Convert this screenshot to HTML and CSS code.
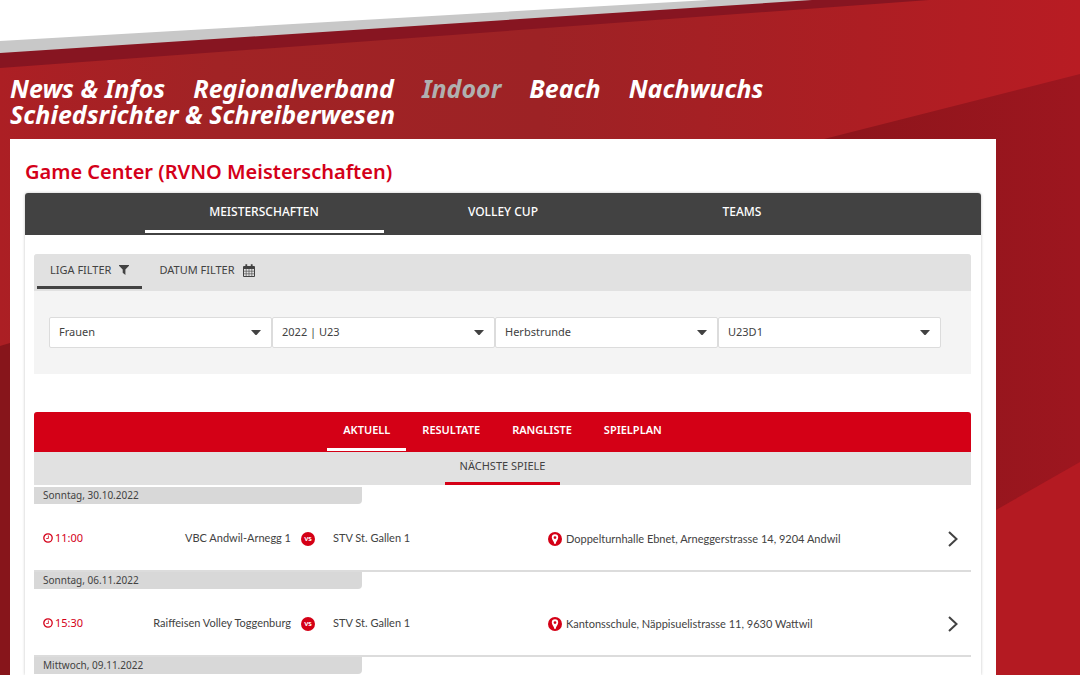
FILE: index.html
```html
<!DOCTYPE html>
<html lang="de">
<head>
<meta charset="utf-8">
<meta name="viewport" content="width=device-width, initial-scale=1">
<title>Game Center (RVNO Meisterschaften)</title>
<link rel="stylesheet" href="styles.css">
</head>
<body>
<svg class="backdrop" viewBox="0 0 1080 675" preserveAspectRatio="none" aria-hidden="true">
  <defs>
    <linearGradient id="red" x1="0" x2="1" y1="0" y2="0">
      <stop offset="0" stop-color="#ac1f24"/>
      <stop offset="0.2" stop-color="#a12325"/>
      <stop offset="0.5" stop-color="#9d2225"/>
      <stop offset="0.8" stop-color="#ad1e23"/>
      <stop offset="1" stop-color="#b81c23"/>
    </linearGradient>
    <linearGradient id="dark" x1="0" x2="1" y1="0" y2="0">
      <stop offset="0" stop-color="#8c151b"/>
      <stop offset="1" stop-color="#9d161f"/>
    </linearGradient>
  </defs>
  <rect width="1080" height="675" fill="url(#red)"/>
  <path d="M820 140L1080 74V675H820z" fill="url(#dark)"/>
  <path d="M996 510L1080 462V675H996z" fill="#b41a22"/>
  <path d="M0 346L10 343V675H0z" fill="#87151b"/>
  <path d="M0 0H929L0 68z" fill="#871521"/>
  <path d="M0 0H812L0 53z" fill="#c8c8c8"/>
  <path d="M0 0H709L0 41z" fill="#fff"/>
</svg>
<svg class="symbols" aria-hidden="true">
  <symbol id="caret" viewBox="0 0 10 5"><path d="M0 0H10L6 4.4Q5 5.4 4 4.4z"/></symbol>
  <symbol id="clock" viewBox="0 0 10 10"><circle cx="5" cy="5" r="4.2" fill="none" stroke="currentColor" stroke-width="1.3"/><path d="M5.4 2.5V5.5H3.2" fill="none" stroke="currentColor" stroke-width=".8"/></symbol>
  <symbol id="pin" viewBox="0 0 14 14"><circle cx="7" cy="7" r="7"/><path fill="#fff" fill-rule="evenodd" d="M7 2.3a3.2 3.2 0 0 1 3.2 3.2C10.200 7.600 8.200 9 7.500 12H6.500C5.800 9 3.800 7.600 3.800 5.500A3.200 3.200 0 0 1 7 2.300zM7 4.200a1.400 1.400 0 1 0 0 2.800 1.400 1.400 0 0 0 0-2.800z"/></symbol>
  <symbol id="chevron" viewBox="0 0 10 16"><path d="M1 1L8.500 8L1 15" fill="none" stroke="currentColor" stroke-width="2"/></symbol>
</svg>

<header class="site-header">
  <nav class="main-nav">
    <a href="#">News &amp; Infos</a>
    <a href="#">Regionalverband</a>
    <a href="#" class="current">Indoor</a>
    <a href="#">Beach</a>
    <a href="#">Nachwuchs</a>
    <a href="#">Schiedsrichter &amp; Schreiberwesen</a>
  </nav>
</header>

<main class="page">
  <h1>Game Center (RVNO Meisterschaften)</h1>
  <section class="card">
    <div class="top-tabs">
      <button class="active">MEISTERSCHAFTEN</button>
      <button>VOLLEY CUP</button>
      <button>TEAMS</button>
    </div>
    <div class="card-body">
      <div class="filter">
        <div class="filter-tabs">
          <button class="active">LIGA FILTER
            <svg class="funnel" viewBox="0 0 10 10"><path d="M0 0H10V.8L6.400 4.500V10L3.700 7.800V4.500L0 .8z"/></svg>
          </button>
          <button>DATUM FILTER
            <svg class="calendar" viewBox="0 0 12 13"><path d="M.5 2.500H11.500V12.500H.5zM.5 4.500H11.500M.5 3.500H11.500"/><path d="M3.200 5V12.500M6 5V12.500M8.800 5V12.500M.5 7.200H11.500M.5 9.800H11.500" stroke-width=".6"/><path d="M3.300 .3V3.600M8.700 .3V3.600" stroke-width="1.800"/></svg>
          </button>
        </div>
        <form class="selects">
          <label><select aria-label="Kategorie"><option>Frauen</option></select><svg><use href="#caret"/></svg></label>
          <label><select aria-label="Saison"><option>2022 | U23</option></select><svg><use href="#caret"/></svg></label>
          <label><select aria-label="Runde"><option>Herbstrunde</option></select><svg><use href="#caret"/></svg></label>
          <label><select aria-label="Gruppe"><option>U23D1</option></select><svg><use href="#caret"/></svg></label>
        </form>
      </div>

      <div class="view-tabs">
        <button class="active">AKTUELL</button>
        <button>RESULTATE</button>
        <button>RANGLISTE</button>
        <button>SPIELPLAN</button>
      </div>
      <div class="sub-tabs"><button>NÄCHSTE SPIELE</button></div>

      <div class="games">
        <h2>Sonntag, 30.10.2022</h2>
        <a href="#" class="game">
          <span class="time"><svg><use href="#clock"/></svg>11:00</span>
          <span class="home">VBC Andwil-Arnegg 1</span>
          <span class="versus">vs</span>
          <span class="away">STV St. Gallen 1</span>
          <span class="place"><svg><use href="#pin"/></svg>Doppelturnhalle Ebnet, Arneggerstrasse 14, 9204 Andwil</span>
          <svg class="go"><use href="#chevron"/></svg>
        </a>
        <h2>Sonntag, 06.11.2022</h2>
        <a href="#" class="game">
          <span class="time"><svg><use href="#clock"/></svg>15:30</span>
          <span class="home">Raiffeisen Volley Toggenburg</span>
          <span class="versus">vs</span>
          <span class="away">STV St. Gallen 1</span>
          <span class="place"><svg><use href="#pin"/></svg>Kantonsschule, Näppisuelistrasse 11, 9630 Wattwil</span>
          <svg class="go"><use href="#chevron"/></svg>
        </a>
        <h2>Mittwoch, 09.11.2022</h2>
      </div>
    </div>
  </section>
</main>
</body>
</html>
```

FILE: styles.css
```css
* { box-sizing: border-box; }

body {
  margin: 0;
  min-height: 100vh;
  display: flex;
  flex-direction: column;
  font-family: "Noto Sans", "Open Sans", sans-serif;
  font-size: 11px;
  line-height: 16px;
  color: #424242;
}

button, select { font: inherit; color: inherit; }
button { border: 0; background: none; cursor: pointer; }
a { color: inherit; text-decoration: none; }
svg { fill: currentColor; flex: none; }

.backdrop { position: absolute; inset: 0; width: 100%; height: 100%; z-index: -1; }
.symbols { position: absolute; width: 0; height: 0; }

.site-header { padding: 75px 84px 12px 10px; }
.main-nav {
  display: flex;
  flex-wrap: wrap;
  column-gap: 28px;
  font-size: 25px;
  line-height: 26px;
  font-weight: 700;
  font-style: italic;
  color: #fff;
}
.main-nav .current { color: #b0b0b0; }

.page {
  flex: 1;
  display: flex;
  flex-direction: column;
  margin: 0 84px 0 10px;
  padding: 18px 15px 0;
  background: #fff;
}
h1 {
  margin: 0 0 6px;
  font-size: 20px;
  line-height: 30px;
  font-weight: 600;
  color: #d40019;
}

.card {
  flex: 1;
  border-radius: 3px 3px 0 0;
  box-shadow: 0 0 3px rgba(0, 0, 0, .25);
}
.top-tabs {
  display: flex;
  justify-content: center;
  height: 42px;
  padding-bottom: 2px;
  border-radius: 3px 3px 0 0;
  background: #424242;
  color: #fff;
  font-size: 12px;
  font-weight: 500;
}
.top-tabs button { width: 25%; padding: 0; border-bottom: 3px solid transparent; }
.top-tabs .active { border-bottom-color: #fff; }

.card-body { padding: 19px 10px 0 9px; }
.filter { margin-bottom: 38px; border-radius: 3px 3px 0 0; background: #f4f4f4; }
.filter-tabs {
  display: flex;
  gap: 4px;
  height: 37px;
  padding: 0 3px 2px;
  border-radius: 3px 3px 0 0;
  background: #e1e1e1;
}
.filter-tabs button {
  display: flex;
  align-items: center;
  gap: 8px;
  padding: 0 13px;
  border-bottom: 3px solid transparent;
}
.filter-tabs .active { border-bottom-color: #424242; }
.funnel { width: 10px; height: 10px; }
.calendar { width: 12px; height: 13px; fill: none; stroke: currentColor; }

.selects { display: flex; padding: 26px 30px 26px 15px; }
.selects label { position: relative; flex: 1; }
.selects select {
  appearance: none;
  width: 100%;
  height: 31px;
  padding: 0 24px 2px 9px;
  border: 1px solid #dcdcdc;
  border-radius: 2px;
  background: #fff;
}
.selects svg { position: absolute; right: 11px; top: 13px; width: 10px; height: 5px; pointer-events: none; }

.view-tabs {
  display: flex;
  justify-content: center;
  height: 40px;
  padding-bottom: 1px;
  border-radius: 3px 3px 0 0;
  background: #d40016;
  color: #fff;
  font-weight: 600;
}
.view-tabs button { padding: 0 16px; border-bottom: 3px solid transparent; }
.view-tabs .active { border-bottom-color: #fff; }
.sub-tabs { display: flex; justify-content: center; height: 33px; margin-bottom: 2px; background: #e1e1e1; }
.sub-tabs button { padding: 0 15px 2px; border-bottom: 3px solid #d40016; }

.games h2 {
  width: 35%;
  margin: 0;
  padding: 0 9px;
  border-radius: 0 0 4px 0;
  background: #d8d8d8;
  font-size: 10px;
  line-height: 17px;
  font-weight: 400;
}
.game {
  display: grid;
  grid-template-columns: 60px 188fr 34px 223fr 400fr 10px;
  align-items: center;
  height: 68px;
  padding: 4px 13px 0 9px;
  border-bottom: 2px solid #dcdcdc;
  font-family: Lato, "Noto Sans", sans-serif;
}
.time, .home, .away { padding-bottom: 2px; }
.time { display: flex; align-items: center; gap: 2px; color: #d40019; font-family: "Noto Sans", sans-serif; }
.time svg { width: 10px; height: 10px; }
.home { text-align: right; }
.versus {
  justify-self: center;
  width: 14px;
  height: 14px;
  border-radius: 50%;
  background: #d40016;
  color: #fff;
  font-size: 8px;
  line-height: 13px;
  font-weight: 700;
  text-align: center;
}
.away { padding-left: 8px; }
.place { display: flex; align-items: center; gap: 4px; }
.place svg { width: 14px; height: 14px; color: #d40016; }
.go { width: 10px; height: 16px; }
```
